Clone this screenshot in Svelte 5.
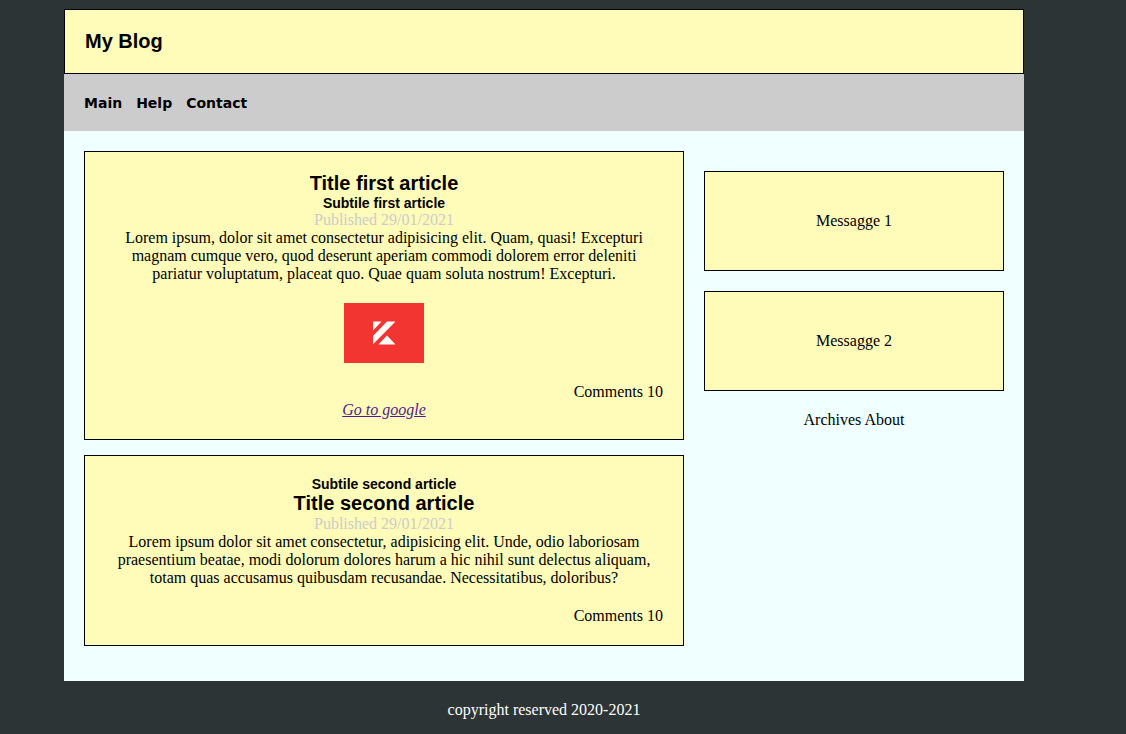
<script>
  const messages = ['Messagge 1', 'Messagge 2'];
</script>

<div class="page">
  <div class="wrapper">
    <header><h1>My Blog</h1></header>
    <nav>
      <a href="#main">Main</a>
      <a href="#help">Help</a>
      <a href="#contact">Contact</a>
    </nav>
    <div class="content">
      <main>
        <article>
          <h2>Title first article</h2>
          <h3>Subtile first article</h3>
          <p class="date">Published 29/01/2021</p>
          <p>Lorem ipsum, dolor sit amet consectetur adipisicing elit. Quam, quasi! Excepturi magnam cumque vero, quod deserunt aperiam commodi dolorem error deleniti pariatur voluptatum, placeat quo. Quae quam soluta nostrum! Excepturi.</p>
          <svg class="logo" viewBox="0 0 80 60" aria-hidden="true">
            <rect width="80" height="60" fill="#f23530" />
            <path fill="#fff" d="M29 18.5h8.5L29 27.5zM43 18.5h8.5L29 41.3v-8.3zM43 32.5l8.5 9H34.5z" />
          </svg>
          <p class="comments">Comments 10</p>
          <a class="link" href="#google">Go to google</a>
        </article>
        <article>
          <h3>Subtile second article</h3>
          <h2>Title second article</h2>
          <p class="date">Published 29/01/2021</p>
          <p>Lorem ipsum dolor sit amet consectetur, adipisicing elit. Unde, odio laboriosam praesentium beatae, modi dolorum dolores harum a hic nihil sunt delectus aliquam, totam quas accusamus quibusdam recusandae. Necessitatibus, doloribus?</p>
          <p class="comments spaced">Comments 10</p>
        </article>
      </main>
      <aside>
        {#each messages as message}
          <div class="message">{message}</div>
        {/each}
        <p>Archives About</p>
      </aside>
    </div>
    <footer>copyright reserved 2020-2021</footer>
  </div>
</div>

<style>
  :global(body) {
    background: #2d3436;
    font-family: "Liberation Serif", "Times New Roman", serif;
    font-size: 16px;
    line-height: 18px;
    color: #000;
  }
  * { box-sizing: border-box; }
  h1, h2, h3, p { margin: 0; }
  .page { padding: 9px 38px 0 0; }
  .wrapper {
    max-width: 960px;
    margin: 0 auto;
  }
  header {
    padding: 20px;
    border: 1px solid #000;
    background: #fffbb8;
  }
  h1, h2, h3 { font-family: "Liberation Sans", Arial, sans-serif; }
  h1, h2 { font-size: 20px; line-height: 23px; }
  h3 { font-size: 14px; line-height: 16px; }
  nav {
    display: flex;
    gap: 14px;
    padding: 21px 20px 19px;
    background: #ccc;
  }
  nav a {
    font: bold 14px/17px "DejaVu Sans", Verdana, sans-serif;
    color: #000;
    text-decoration: none;
  }
  .content {
    display: flex;
    align-items: flex-start;
    gap: 20px;
    padding: 20px;
    background: #f0ffff;
    text-align: center;
  }
  main { flex: 2; min-width: 0; }
  article {
    margin-bottom: 15px;
    padding: 20px;
    border: 1px solid #000;
    background: #fffbb8;
  }
  article p { padding: 0 10px; }
  article .date { color: #ccc; }
  .logo { display: block; width: 80px; height: 60px; margin: 20px auto; }
  article .comments { padding: 0; text-align: right; }
  .spaced { margin-top: 20px; }
  .link { color: #551a8b; font-style: italic; }
  aside { flex: 0 0 300px; padding-top: 20px; }
  .message {
    display: grid;
    place-items: center;
    height: 100px;
    margin-bottom: 20px;
    border: 1px solid #000;
    background: #fffbb8;
  }
  footer { padding: 20px; text-align: center; color: #fff; }
</style>
